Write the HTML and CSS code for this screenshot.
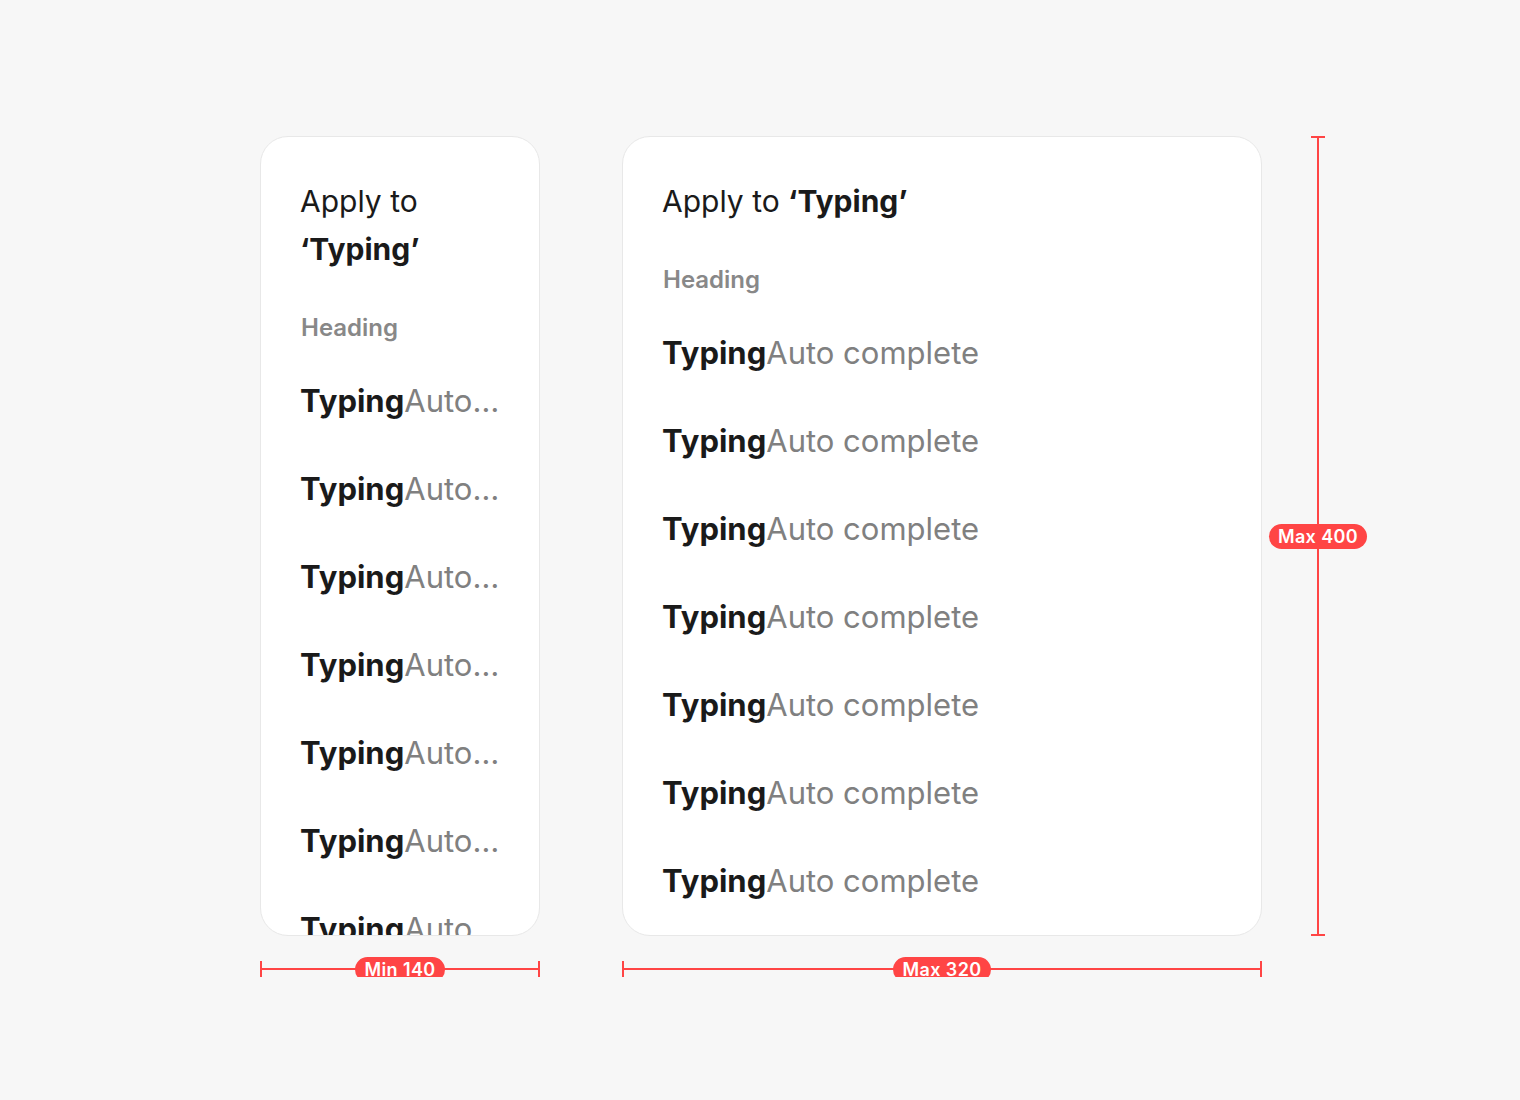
FILE: index.html
```html
<!DOCTYPE html>
<html lang="en">
<head>
<meta charset="utf-8">
<title>Apply to Typing</title>
<link rel="stylesheet" href="styles.css">
</head>
<body>
<main class="stage">
  <section class="col">
    <div class="card card-min">
      <h2 class="title">Apply to <b>‘Typing’</b></h2>
      <div class="heading">Heading</div>
      <ul class="list">
        <li class="item"><b>Typing</b><span class="rest">Auto complete</span></li>
        <li class="item"><b>Typing</b><span class="rest">Auto complete</span></li>
        <li class="item"><b>Typing</b><span class="rest">Auto complete</span></li>
        <li class="item"><b>Typing</b><span class="rest">Auto complete</span></li>
        <li class="item"><b>Typing</b><span class="rest">Auto complete</span></li>
        <li class="item"><b>Typing</b><span class="rest">Auto complete</span></li>
        <li class="item"><b>Typing</b><span class="rest">Auto complete</span></li>
      </ul>
    </div>
    <div class="hmeasure"><span class="badge">Min 140</span></div>
  </section>
  <section class="col">
    <div class="card card-max">
      <h2 class="title">Apply to <b>‘Typing’</b></h2>
      <div class="heading">Heading</div>
      <ul class="list">
        <li class="item"><b>Typing</b><span class="rest">Auto complete</span></li>
        <li class="item"><b>Typing</b><span class="rest">Auto complete</span></li>
        <li class="item"><b>Typing</b><span class="rest">Auto complete</span></li>
        <li class="item"><b>Typing</b><span class="rest">Auto complete</span></li>
        <li class="item"><b>Typing</b><span class="rest">Auto complete</span></li>
        <li class="item"><b>Typing</b><span class="rest">Auto complete</span></li>
        <li class="item"><b>Typing</b><span class="rest">Auto complete</span></li>
      </ul>
    </div>
    <div class="hmeasure"><span class="badge">Max 320</span></div>
  </section>
  <div class="vmeasure"><span class="badge">Max 400</span></div>
</main>
</body>
</html>
```

FILE: styles.css
```css
* { box-sizing: border-box; }
html, body { margin: 0; padding: 0; }
body {
  background: #f7f7f7;
  font-family: Inter, "Noto Sans", sans-serif;
  color: #1a1a1a;
}
.stage {
  display: flex;
  align-items: flex-start;
  gap: 82px;
  padding: 136px 0 0 260px;
}
.col {
  display: flex;
  flex-direction: column;
  gap: 20px;
}
.card {
  height: 800px;
  background: #fff;
  border: 1px solid #e8e8e8;
  border-radius: 28px;
  padding: 40px 39px;
  overflow: hidden;
}
.card-min { width: 280px; }
.card-max { width: 640px; }
.title {
  margin: 0;
  font-size: 30px;
  line-height: 48px;
  font-weight: 400;
  color: #1a1a1a;
}
.title b { font-weight: 700; }
.heading {
  margin: 39px 0 13px 1px;
  font-size: 24px;
  line-height: 32px;
  font-weight: 600;
  color: #888888;
}
.list { list-style: none; margin: 0; padding: 0; }
.item {
  padding: 20px 0;
  font-size: 31px;
  line-height: 48px;
  white-space: nowrap;
  overflow: hidden;
  text-overflow: ellipsis;
  color: #808080;
}
.item b { font-weight: 700; color: #1a1a1a; }
.rest { color: #808080; }

.hmeasure {
  display: flex;
  align-items: center;
  justify-content: center;
  height: 16px;
  margin-top: 5px;
  border-left: 2px solid #ff4545;
  border-right: 2px solid #ff4545;
  background: linear-gradient(#ff4545, #ff4545) center / 100% 2px no-repeat;
}
.vmeasure {
  display: flex;
  align-items: center;
  justify-content: center;
  width: 14px;
  height: 800px;
  margin-left: -33px;
  border-top: 2px solid #ff4545;
  border-bottom: 2px solid #ff4545;
  background: linear-gradient(#ff4545, #ff4545) center / 2px 100% no-repeat;
}
.badge {
  display: inline-block;
  flex: none;
  height: 25px;
  line-height: 25px;
  padding: 0 9px;
  border-radius: 13px;
  background: #ff4545;
  color: #fff;
  font-size: 18px;
  font-weight: 600;
  letter-spacing: 0.4px;
  white-space: nowrap;
}
```
